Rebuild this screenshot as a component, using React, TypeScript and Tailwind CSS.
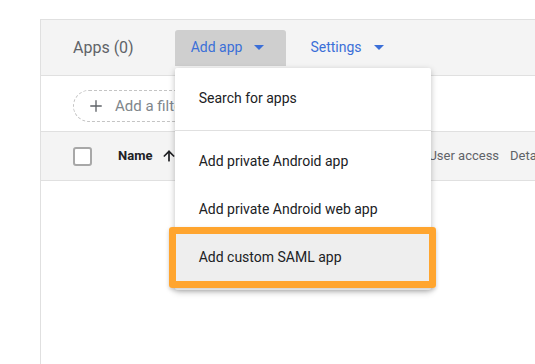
import { ArrowUp, Plus } from 'lucide-react';

function Caret() {
  return (
    <svg width="10" height="5" viewBox="0 0 10 5" className="fill-[#3b6fd8]">
      <path d="M0 0h10L5 5z" />
    </svg>
  );
}

const menuItems = ['Add private Android app', 'Add private Android web app'];

export default function App() {
  return (
    <div className="h-[364px] w-[535px] overflow-hidden bg-white font-['Roboto',sans-serif]">
      <div className="ml-[40px] mt-[19px] h-[345px] border-l border-t border-[#e0e0e0]">
        {/* Header bar */}
        <div className="flex h-[56px] items-center border-b border-[#e0e0e0] bg-[#f4f4f4] pl-[32px]">
          <span className="text-[16px] text-[#5f6368]">Apps (0)</span>
          <div className="relative ml-[41px]">
            <button className="flex h-[36px] items-center gap-[12px] rounded-t-[3px] bg-[#cfcfcf] pl-[16px] pr-[22px] text-[14px] text-[#3b6fd8]">
              Add app
              <Caret />
            </button>

            {/* Dropdown menu */}
            <div className="absolute left-0 top-[38px] z-10 w-[256px] rounded-[2px] bg-white pt-[7px] pb-[8px] text-[14px] text-[#202124] shadow-[0_2px_6px_rgba(0,0,0,0.25)]">
              <div className="flex h-[48px] items-center pl-[24px]">Search for apps</div>
              <div className="my-[7px] border-t border-[#e0e0e0]" />
              {menuItems.map((item) => (
                <div key={item} className="flex h-[48px] items-center pl-[24px]">
                  {item}
                </div>
              ))}
              <div className="relative flex h-[48px] items-center bg-[#eeeeee] pl-[24px]">
                Add custom SAML app
                <div className="absolute -bottom-[6px] -left-[6px] -right-[5px] -top-[7px] rounded-[3px] border-[7px] border-[#ffa52f] shadow-[0_2px_4px_rgba(0,0,0,0.2)]" />
              </div>
            </div>
          </div>
          <button className="ml-[8px] flex h-[36px] items-center gap-[12px] px-[16px] text-[14px] text-[#3b6fd8]">
            Settings
            <Caret />
          </button>
        </div>

        {/* Filter row */}
        <div className="h-[55px] pl-[32px] pt-[14px]">
          <div className="flex h-[32px] w-[180px] items-center gap-[10px] rounded-full border border-dashed border-[#c4c4c4] pl-[13px] text-[15px] text-[#80868b]">
            <Plus className="h-[18px] w-[18px] text-[#5f6368]" strokeWidth={1.8} />
            Add a filter
          </div>
        </div>

        {/* Table header */}
        <div className="flex h-[50px] items-center whitespace-nowrap border-y border-[#e0e0e0] bg-[#f4f4f4] pl-[32px] text-[13px]">
          <div className="h-[19px] w-[19px] shrink-0 rounded-[3px] border-2 border-[#a8a8a8] bg-white" />
          <span className="ml-[26px] font-bold text-[#202124]">Name</span>
          <ArrowUp className="ml-[9px] h-[16px] w-[16px] shrink-0 text-[#202124]" strokeWidth={2.6} />
          <span className="ml-[251px] shrink-0 text-[#5f6368]">User access</span>
          <span className="ml-[11px] shrink-0 text-[#5f6368]">Details</span>
        </div>
      </div>
    </div>
  );
}
